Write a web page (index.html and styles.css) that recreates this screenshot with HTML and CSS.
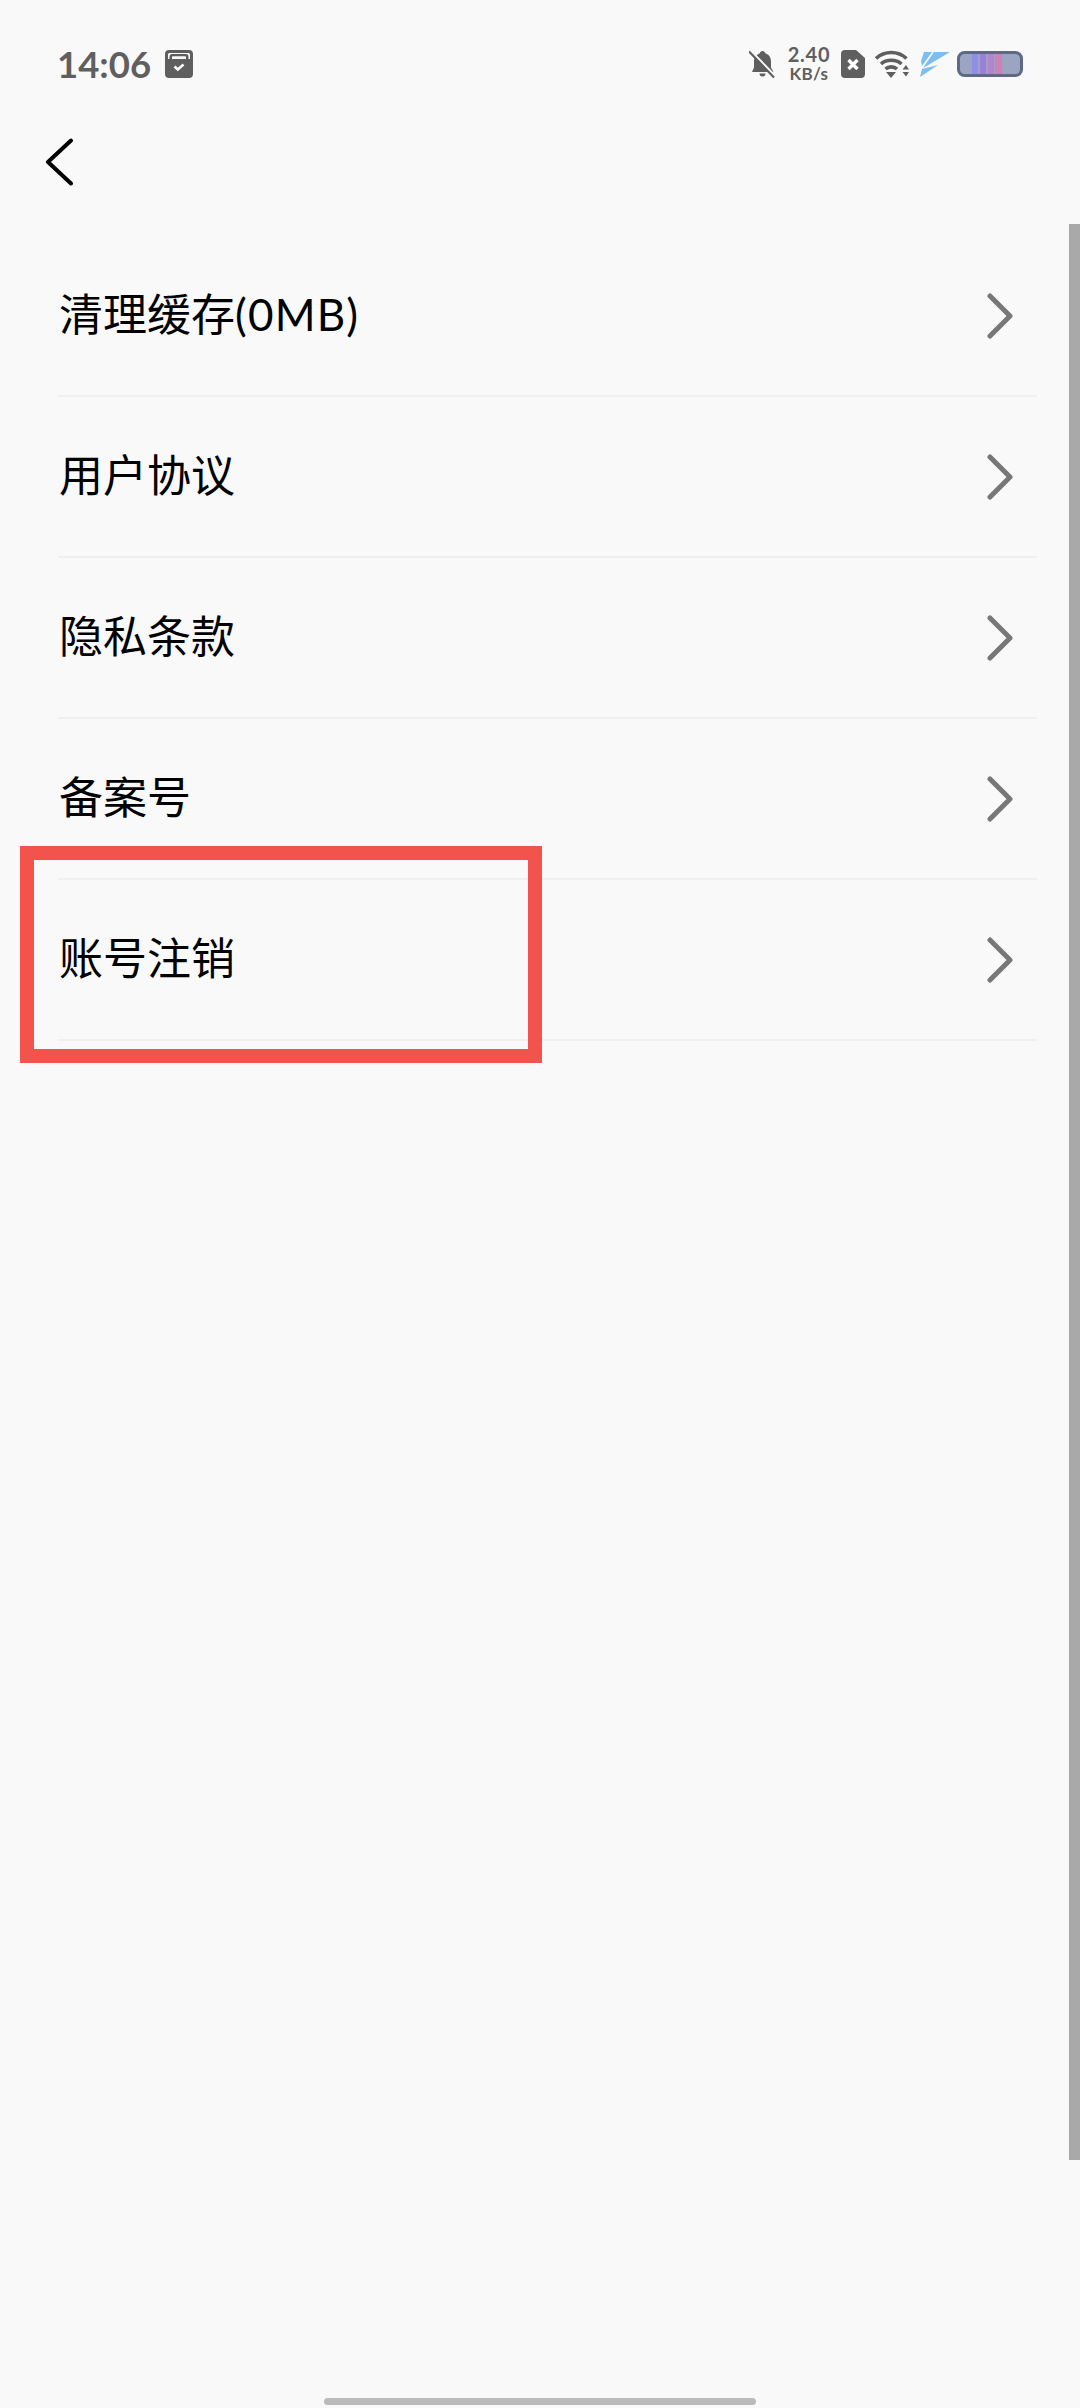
FILE: index.html
```html
<!DOCTYPE html>
<html lang="zh-CN">
<head>
<meta charset="utf-8">
<title>设置</title>
<link rel="stylesheet" href="styles.css">
</head>
<body>
<div class="page">
  <header class="status">
    <div class="status-left">
      <span class="time">14:06</span>
      <svg class="ic-cal" width="28" height="28" viewBox="0 0 28 28"><path fill="#5f5f5f" fill-rule="evenodd" d="M4 0h20a4 4 0 0 1 4 4v20a4 4 0 0 1-4 4H4a4 4 0 0 1-4-4V4a4 4 0 0 1 4-4zM3 9h1.500V6.500A2.500 2.500 0 0 1 7 4h14a2.500 2.500 0 0 1 2.500 2.500V9H25V4.500A1.500 1.500 0 0 0 23.500 3h-19A1.500 1.500 0 0 0 3 4.500zM7 9h14V7a.8.8 0 0 0-.8-.8H7.800A.8.8 0 0 0 7 7z"/><path d="M9.500 16.500l3.300 3 5.700-5" fill="none" stroke="#fff" stroke-width="2.600"/></svg>
    </div>
    <div class="status-right">
      <svg class="ic-bell" width="27" height="28" viewBox="0 0 27 28"><path fill="#5f5f5f" d="M13.500 1c1.500 0 2.500 1 2.600 2.200C20 4.300 22 7.500 22 11.500v6l2.500 4.500H3l2-4.500v-6c0-4 2.500-7.200 6-8.300C11 2 12 1 13.500 1zM10.500 23.500h6a3 3 0 0 1-6 0z"/><path d="M1.500 0.500l25 26" stroke="#f9f9f9" stroke-width="2.500"/><path d="M0 1.500l25 26" stroke="#5f5f5f" stroke-width="2.200"/></svg>
      <div class="speed"><span class="speed-num">2.40</span><span class="speed-unit">KB/s</span></div>
      <svg class="ic-sim" width="24" height="28" viewBox="0 0 24 28"><path fill="#5f5f5f" d="M4 0h11l9 8v16a4 4 0 0 1-4 4H4a4 4 0 0 1-4-4V4a4 4 0 0 1 4-4z"/><path d="M7.500 10l9 9m0-9l-9 9" stroke="#fff" stroke-width="3.400" fill="none"/></svg>
      <svg class="ic-wifi" width="34" height="28" viewBox="0 0 34 28"><g fill="none" stroke="#5f5f5f" stroke-width="3.600"><path d="M1 8.500C9.500 0.500 23 0.500 31.500 8.500"/><path d="M6 14c5.500-5 15-5 20.500 0"/><path d="M10.500 19c3-2.800 8.500-2.800 11.500 0"/></g><path fill="#5f5f5f" d="M11 22h10l-5 6zM27.500 19.500l3.500-4.500 3 4.500zM27.500 22h6.500l-3 4.500z"/></svg>
      <svg class="ic-bolt" width="31" height="26" viewBox="0 0 31 26"><path fill="#7fbdf0" d="M5 1h8L3 15 2 10zM15 1h16L11 13l-7 4 4-6zM19 14L1 26l2-8z"/></svg>
      <svg class="ic-batt" width="66" height="26" viewBox="0 0 66 26"><rect x="1.500" y="1.500" width="63" height="23" rx="6" fill="#9ba4c0" stroke="#5f6985" stroke-width="3"/><rect x="15" y="3" width="6" height="20" fill="#8f8ee8"/><rect x="23" y="3" width="6" height="20" fill="#9a80d8"/><rect x="31" y="3" width="6" height="20" fill="#b583c9"/><rect x="38" y="3" width="7" height="20" fill="#d07fb8"/></svg>
    </div>
  </header>

  <nav class="nav">
    <svg width="29" height="48" viewBox="0 0 29 48"><path d="M26 2.500L3 24l23 21.500" fill="none" stroke="#000" stroke-width="4" stroke-linecap="round" stroke-linejoin="round"/></svg>
  </nav>

  <ul class="list">
    <li class="row"><span class="label">清理缓存<span class="latin">(0MB)</span></span><svg class="chev" width="26" height="46" viewBox="0 0 26 46"><path d="M3 3l20 20L3 43" fill="none" stroke="#777" stroke-width="5" stroke-linecap="round" stroke-linejoin="round"/></svg></li>
    <li class="row"><span class="label">用户协议</span><svg class="chev" width="26" height="46" viewBox="0 0 26 46"><path d="M3 3l20 20L3 43" fill="none" stroke="#777" stroke-width="5" stroke-linecap="round" stroke-linejoin="round"/></svg></li>
    <li class="row"><span class="label">隐私条款</span><svg class="chev" width="26" height="46" viewBox="0 0 26 46"><path d="M3 3l20 20L3 43" fill="none" stroke="#777" stroke-width="5" stroke-linecap="round" stroke-linejoin="round"/></svg></li>
    <li class="row"><span class="label">备案号</span><svg class="chev" width="26" height="46" viewBox="0 0 26 46"><path d="M3 3l20 20L3 43" fill="none" stroke="#777" stroke-width="5" stroke-linecap="round" stroke-linejoin="round"/></svg></li>
    <li class="row"><span class="label">账号注销</span><svg class="chev" width="26" height="46" viewBox="0 0 26 46"><path d="M3 3l20 20L3 43" fill="none" stroke="#777" stroke-width="5" stroke-linecap="round" stroke-linejoin="round"/></svg></li>
  </ul>

  <div class="highlight"></div>
  <div class="scrollbar"></div>
  <div class="home-bar"></div>
</div>
</body>
</html>
```

FILE: styles.css
```css
* { box-sizing: border-box; }
html, body { margin: 0; padding: 0; }
body {
  background: #f9f9f9;
  font-family: "Noto Sans CJK SC", "Noto Sans", sans-serif;
}
.page {
  position: relative;
  width: 1080px;
  height: 2408px;
  overflow: hidden;
  background: #f9f9f9;
}
.status {
  height: 128px;
  padding: 48px 57px 0 57px;
  display: flex;
  justify-content: space-between;
  align-items: flex-start;
}
.status-left {
  display: flex;
  align-items: center;
  gap: 16px;
  height: 32px;
}
.time {
  width: 92px;
  white-space: nowrap;
  font-family: "Lato", sans-serif;
  font-size: 36.5px;
  line-height: 32px;
  font-weight: 700;
  color: #5f5f5f;
}
.status-right {
  display: flex;
  align-items: center;
  height: 32px;
}
.ic-bell { margin-right: 10px; }
.speed {
  width: 46px;
  margin-right: 9px;
  display: flex;
  flex-direction: column;
  align-items: center;
  font-family: "Lato", sans-serif;
  color: #5f5f5f;
  font-weight: 700;
}
.speed-num { display: block; font-size: 20px; line-height: 20px; letter-spacing: 0.8px; }
.speed-unit { display: block; font-size: 17px; line-height: 20px; letter-spacing: 0.3px; }
.ic-sim { margin-right: 10px; }
.ic-wifi { margin-right: 10px; }
.ic-bolt { margin-right: 7px; }
.nav {
  height: 108px;
  padding-left: 45px;
  display: flex;
  align-items: flex-start;
  padding-top: 10px;
}
.list {
  list-style: none;
  margin: 0 43px 0 58px;
  padding: 0;
}
.row {
  height: 161px;
  display: flex;
  align-items: center;
  justify-content: space-between;
  padding: 0 24px 0 1px;
  border-bottom: 2px solid #f0f0f0;
}
.label {
  font-family: "Lato", "Noto Sans CJK SC", sans-serif;
  font-size: 44px;
  line-height: 60px;
  color: #000;
  position: relative;
  top: -2px;
}
.latin { letter-spacing: 1.2px; }
.chev { display: block; }
.highlight {
  position: absolute;
  left: 20px;
  top: 846px;
  width: 522px;
  height: 217px;
  border: 14px solid #f2534d;
}
.scrollbar {
  position: absolute;
  left: 1069px;
  top: 224px;
  width: 11px;
  height: 1936px;
  background: #a9a9a9;
}
.home-bar {
  position: absolute;
  left: 324px;
  top: 2398px;
  width: 432px;
  height: 7px;
  border-radius: 4px;
  background: #bbbbbb;
}
```
